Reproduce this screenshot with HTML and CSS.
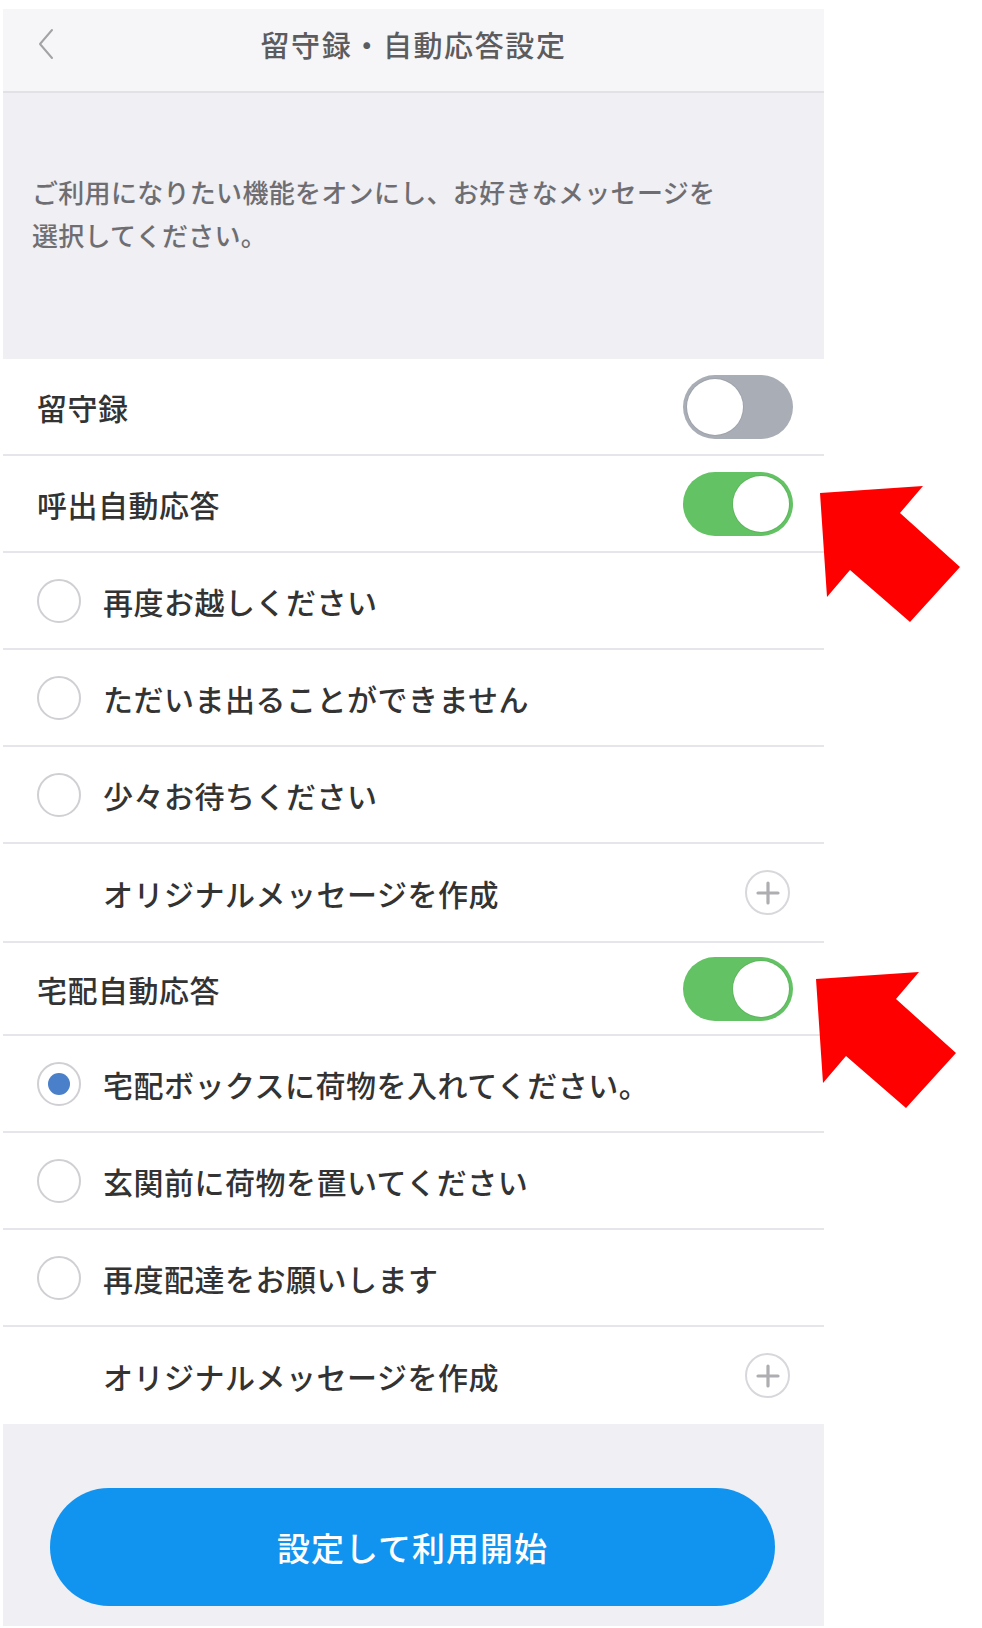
FILE: index.html
```html
<!DOCTYPE html>
<html lang="ja">
<head>
<meta charset="utf-8">
<title>留守録・自動応答設定</title>
<link rel="stylesheet" href="styles.css">
</head>
<body>
<div class="page">
  <div class="screen">
    <header class="nav">
      <span class="back">
        <svg width="22" height="32" viewBox="0 0 22 32"><polyline points="17,2 5,16 17,30" fill="none" stroke="#a3a3a6" stroke-width="2" stroke-linecap="round" stroke-linejoin="round"/></svg>
      </span>
      <h1 class="title">留守録・自動応答設定</h1>
      <span></span>
    </header>

    <section class="intro">
      <p>ご利用になりたい機能をオンにし、お好きなメッセージを<br>選択してください。</p>
    </section>

    <ul class="list">
      <li class="row">
        <span class="label">留守録</span>
        <span class="switch"><span class="knob"></span></span>
      </li>
      <li class="row">
        <span class="label">呼出自動応答</span>
        <span class="switch on"><span class="knob"></span></span>
      </li>
      <li class="row">
        <span class="radio"></span>
        <span class="label">再度お越しください</span>
      </li>
      <li class="row">
        <span class="radio"></span>
        <span class="label">ただいま出ることができません</span>
      </li>
      <li class="row">
        <span class="radio"></span>
        <span class="label">少々お待ちください</span>
      </li>
      <li class="row add">
        <span class="label indent">オリジナルメッセージを作成</span>
        <span class="plus">
          <svg width="24" height="24" viewBox="0 0 24 24"><path d="M12 2v20M2 12h20" stroke="#aeaeb2" stroke-width="3.2" stroke-linecap="round"/></svg>
        </span>
      </li>
      <li class="row compact">
        <span class="label">宅配自動応答</span>
        <span class="switch on"><span class="knob"></span></span>
      </li>
      <li class="row">
        <span class="radio checked"><span class="dot"></span></span>
        <span class="label">宅配ボックスに荷物を入れてください。</span>
      </li>
      <li class="row">
        <span class="radio"></span>
        <span class="label">玄関前に荷物を置いてください</span>
      </li>
      <li class="row">
        <span class="radio"></span>
        <span class="label">再度配達をお願いします</span>
      </li>
      <li class="row add last">
        <span class="label indent">オリジナルメッセージを作成</span>
        <span class="plus">
          <svg width="24" height="24" viewBox="0 0 24 24"><path d="M12 2v20M2 12h20" stroke="#aeaeb2" stroke-width="3.2" stroke-linecap="round"/></svg>
        </span>
      </li>
    </ul>

    <div class="footer">
      <button class="cta">設定して利用開始</button>
    </div>
  </div>

  <svg class="arrows" width="982" height="1628" viewBox="0 0 982 1628">
    <polygon points="820,493 923,486 900,513 960,567 910,622 850,570 827,597" fill="#ff0000"/>
    <polygon transform="translate(-4 486)" points="820,493 923,486 900,513 960,567 910,622 850,570 827,597" fill="#ff0000"/>
  </svg>
</div>
</body>
</html>
```

FILE: styles.css
```css
* {
  box-sizing: border-box;
}

body {
  margin: 0;
  background: #ffffff;
  font-family: "Noto Sans CJK JP", "Noto Sans", sans-serif;
}

.page {
  position: relative;
  width: 982px;
  height: 1628px;
  overflow: hidden;
}

.screen {
  width: 821px;
  margin-left: 3px;
  padding-top: 9px;
}

.nav {
  height: 84px;
  background: #f6f6f8;
  border-bottom: 2px solid #e2e2e6;
  display: grid;
  grid-template-columns: 1fr auto 1fr;
  align-items: center;
  padding-bottom: 12px;
}

.back {
  display: flex;
  padding-left: 32px;
}

.title {
  margin: 0;
  font-size: 29px;
  font-weight: 500;
  color: #5c5c5e;
  letter-spacing: 1.6px;
}

.intro {
  height: 266px;
  background: #efeff4;
  padding: 77px 0 0 29px;
}

.intro p {
  margin: 0;
  font-size: 26px;
  font-weight: 500;
  line-height: 43px;
  color: #6e6e72;
  letter-spacing: 0.3px;
}

.list {
  list-style: none;
  margin: 0;
  padding: 0;
}

.row {
  display: flex;
  align-items: center;
  height: 97px;
  padding: 0 31px 0 34px;
  background: #ffffff;
  border-bottom: 2px solid #e6e6ea;
}

.row.add {
  height: 99px;
}

.row.compact {
  height: 93px;
}

.row.last {
  border-bottom: none;
  height: 97px;
}

.label {
  font-size: 30px;
  font-weight: 500;
  color: #333333;
  letter-spacing: 0.5px;
}

.label.indent {
  margin-left: 66px;
}

.radio {
  width: 44px;
  height: 44px;
  border: 2px solid #cfcfd4;
  border-radius: 50%;
  margin-right: 22px;
  display: flex;
  align-items: center;
  justify-content: center;
  flex: none;
}

.radio .dot {
  width: 22px;
  height: 22px;
  border-radius: 50%;
  background: #4a7fc9;
}

.switch {
  margin-left: auto;
  width: 110px;
  height: 64px;
  border-radius: 32px;
  background: #a9adb5;
  display: flex;
  align-items: center;
  justify-content: flex-start;
  padding: 0 4px;
}

.switch.on {
  background: #63c263;
  justify-content: flex-end;
}

.knob {
  width: 56px;
  height: 56px;
  border-radius: 50%;
  background: #ffffff;
  box-shadow: 0 0 0 1px rgba(0, 0, 0, 0.06);
}

.plus {
  margin-left: auto;
  margin-right: 3px;
  width: 45px;
  height: 45px;
  border: 2px solid #d8d8dc;
  border-radius: 50%;
  display: flex;
  align-items: center;
  justify-content: center;
}

.footer {
  background: #efeff4;
  padding: 64px 0 20px 47px;
}

.cta {
  display: block;
  width: 725px;
  height: 118px;
  border: none;
  border-radius: 59px;
  background: #1193f0;
  color: #ffffff;
  font-family: inherit;
  font-size: 33px;
  font-weight: 500;
  letter-spacing: 1px;
}

.arrows {
  position: absolute;
  left: 0;
  top: 0;
  pointer-events: none;
}
```
